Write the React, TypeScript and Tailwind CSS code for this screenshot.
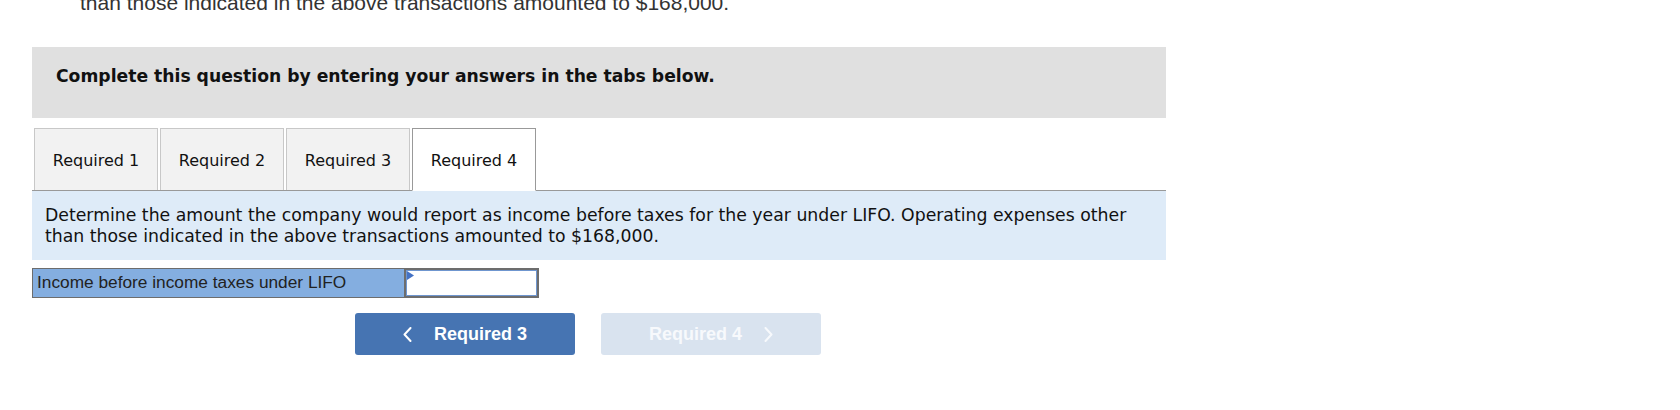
const TABS = ["Required 1", "Required 2", "Required 3", "Required 4"];
const ACTIVE = 3;

const verdana = "font-['Verdana','DejaVu_Sans',sans-serif]";
const arial = "font-['Arial','Liberation_Sans',sans-serif]";

function Tab({ label, active }: { label: string; active: boolean }) {
  return (
    <div
      className={`w-[124px] flex items-center justify-center pt-[3px] text-[16px] text-[#111] border ${
        active
          ? "h-[63px] bg-white border-[#999] border-b-white relative z-10 -mb-px"
          : "h-[62px] bg-[#f2f2f2] border-[#c8c8c8] border-b-0"
      }`}
    >
      {label}
    </div>
  );
}

function Chevron({ dir }: { dir: "left" | "right" }) {
  return (
    <svg width="9" height="15" viewBox="0 0 9 15" fill="none" stroke="currentColor" strokeWidth="2" strokeLinecap="round" strokeLinejoin="round">
      {dir === "left" ? <polyline points="7.5,1 1.5,7.5 7.5,14" /> : <polyline points="1.5,1 7.5,7.5 1.5,14" />}
    </svg>
  );
}

export default function App() {
  return (
    <div className={`w-[1680px] h-[410px] bg-white overflow-hidden ${verdana}`}>
      {/* tail of the previous paragraph, cut off at the top */}
      <div className="h-[14px] overflow-hidden pl-[80px]">
        <p className={`${arial} text-[21px] leading-[21px] -mt-[8px] text-[#333] whitespace-nowrap`}>
          than those indicated in the above transactions amounted to $168,000.
        </p>
      </div>

      <div className="ml-[32px] w-[1134px] mt-[33px]">
        {/* Instructions */}
        <div className="h-[71px] bg-[#e0e0e0] pt-[19px] pl-[24px]">
          <p className="text-[17.2px] leading-[20px] font-bold text-[#111]">
            Complete this question by entering your answers in the tabs below.
          </p>
        </div>

        {/* Tabs */}
        <div className="mt-[10px] flex items-end gap-[2px] pl-[2px]">
          {TABS.map((t, i) => (
            <Tab key={t} label={t} active={i === ACTIVE} />
          ))}
        </div>

        {/* Question panel */}
        <div className="bg-[#deebf8] border-t border-[#999] pt-[14px] pb-[13px] pl-[13px] pr-[10px]">
          <p className="text-[17.3px] leading-[21px] text-[#111]">
            Determine the amount the company would report as income before taxes for the year under LIFO.
            Operating expenses other than those indicated in the above transactions amounted to $168,000.
          </p>
        </div>

        {/* Answer row */}
        <div className={`mt-[8px] flex h-[30px] w-[507px] border border-[#6d6d6d] ${arial}`}>
          <div className="w-[372px] bg-[#84aee0] border-r border-[#6d6d6d] pl-[4px] flex items-center text-[17.3px] text-[#222]">
            Income before income taxes under LIFO
          </div>
          <div className="flex-1 border border-[#6d6d6d] relative">
            <div className="absolute inset-0 border border-[#6f96cf] bg-white" />
            <svg className="absolute left-[1px] top-[1px]" width="7" height="9" viewBox="0 0 7 9">
              <polygon points="0,0 7,4.5 0,9" fill="#4472c4" />
            </svg>
          </div>
        </div>

        {/* Nav buttons */}
        <div className={`mt-[15px] ml-[323px] flex gap-[26px] ${arial}`}>
          <button className="w-[220px] h-[42px] rounded-[3px] bg-[#4674b2] text-white font-bold text-[18px] flex items-center justify-center gap-[22px]">
            <Chevron dir="left" />
            <span>Required 3</span>
          </button>
          <button className="w-[220px] h-[42px] rounded-[3px] bg-[#d9e3ef] text-[#f7f9fc] font-bold text-[18px] flex items-center justify-center gap-[22px]">
            <span>Required 4</span>
            <Chevron dir="right" />
          </button>
        </div>
      </div>
    </div>
  );
}
